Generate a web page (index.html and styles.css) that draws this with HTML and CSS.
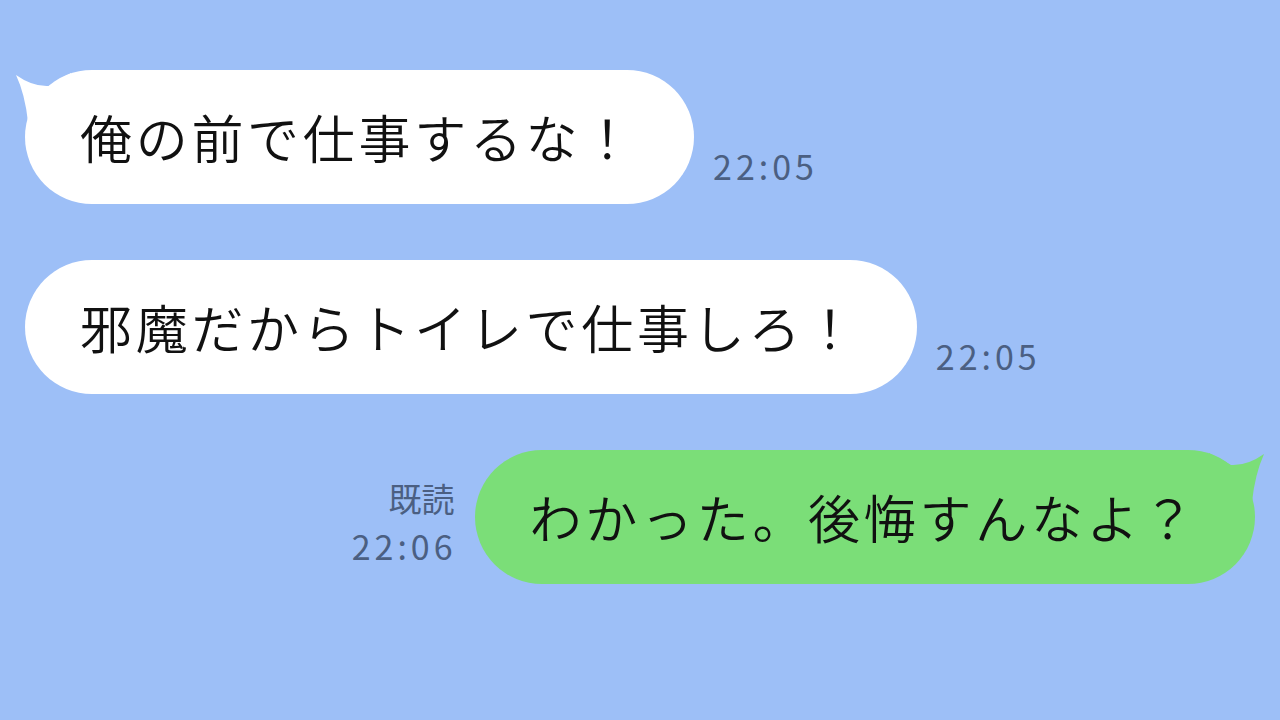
FILE: index.html
```html
<!DOCTYPE html>
<html lang="ja">
<head>
<meta charset="UTF-8">
<meta name="viewport" content="width=device-width, initial-scale=1.0">
<title>トーク</title>
<link rel="stylesheet" href="styles.css">
</head>
<body>

<div class="talk">
  <!-- 相手のメッセージ -->
  <div class="row left">
    <div class="bubble white">
      <svg class="tail" width="60" height="60" viewBox="-12 0 60 60"><path d="M-9 5 Q8 17 24 16 Q34 9 46 3 L46 52 L3 52 Q0 24 -9 5 Z"/></svg>
      <span class="msg">俺の前で仕事するな！</span>
    </div>
    <div class="meta"><span class="time">22:05</span></div>
  </div>

  <div class="row left">
    <div class="bubble white">
      <span class="msg">邪魔だからトイレで仕事しろ！</span>
    </div>
    <div class="meta"><span class="time">22:05</span></div>
  </div>

  <!-- 自分のメッセージ -->
  <div class="row right">
    <div class="meta"><span class="read">既読</span><span class="time">22:06</span></div>
    <div class="bubble green">
      <svg class="tail" width="60" height="60" viewBox="-12 0 60 60"><path d="M-9 4 Q8 16 24 15 Q34 9 46 3 L46 52 L3 52 Q0 24 -9 4 Z"/></svg>
      <span class="msg">わかった。後悔すんなよ？</span>
    </div>
  </div>
</div>

</body>
</html>
```

FILE: styles.css
```css
body {
  margin: 0;
  width: 1280px;
  height: 720px;
  overflow: hidden;
  background-color: #9dbff7;
  font-family: "Noto Sans CJK JP", "Noto Sans", sans-serif;
}
.talk {
  display: flex;
  flex-direction: column;
  gap: 56px;
  padding: 70px 25px 0 25px;
}
.row {
  display: flex;
  align-items: flex-end;
}
.row.right {
  justify-content: flex-end;
}
.bubble {
  position: relative;
  height: 134px;
  display: flex;
  align-items: center;
  padding: 0 57px 0 55px;
  border-radius: 67px;
}
.bubble.white {
  background-color: #ffffff;
}
.bubble.green {
  background-color: #7bde78;
}
.tail {
  position: absolute;
  top: 0;
}
.white .tail {
  left: -12px;
  fill: #ffffff;
}
.green .tail {
  right: -12px;
  fill: #7bde78;
  transform: scaleX(-1);
}
.msg {
  position: relative;
  font-size: 52px;
  font-weight: 350;
  letter-spacing: 3.7px;
  line-height: 1;
  color: #111111;
}
.meta {
  display: flex;
  flex-direction: column;
  align-items: flex-end;
  margin-bottom: 21px;
  color: #4b5f82;
  line-height: 1;
}
.left .meta {
  margin-left: 19px;
}
.right .meta {
  margin-right: 20px;
}
.time {
  font-size: 34px;
  letter-spacing: 4px;
  margin-right: -2px;
}
.read {
  font-size: 33px;
  margin-bottom: 14px;
}
```
